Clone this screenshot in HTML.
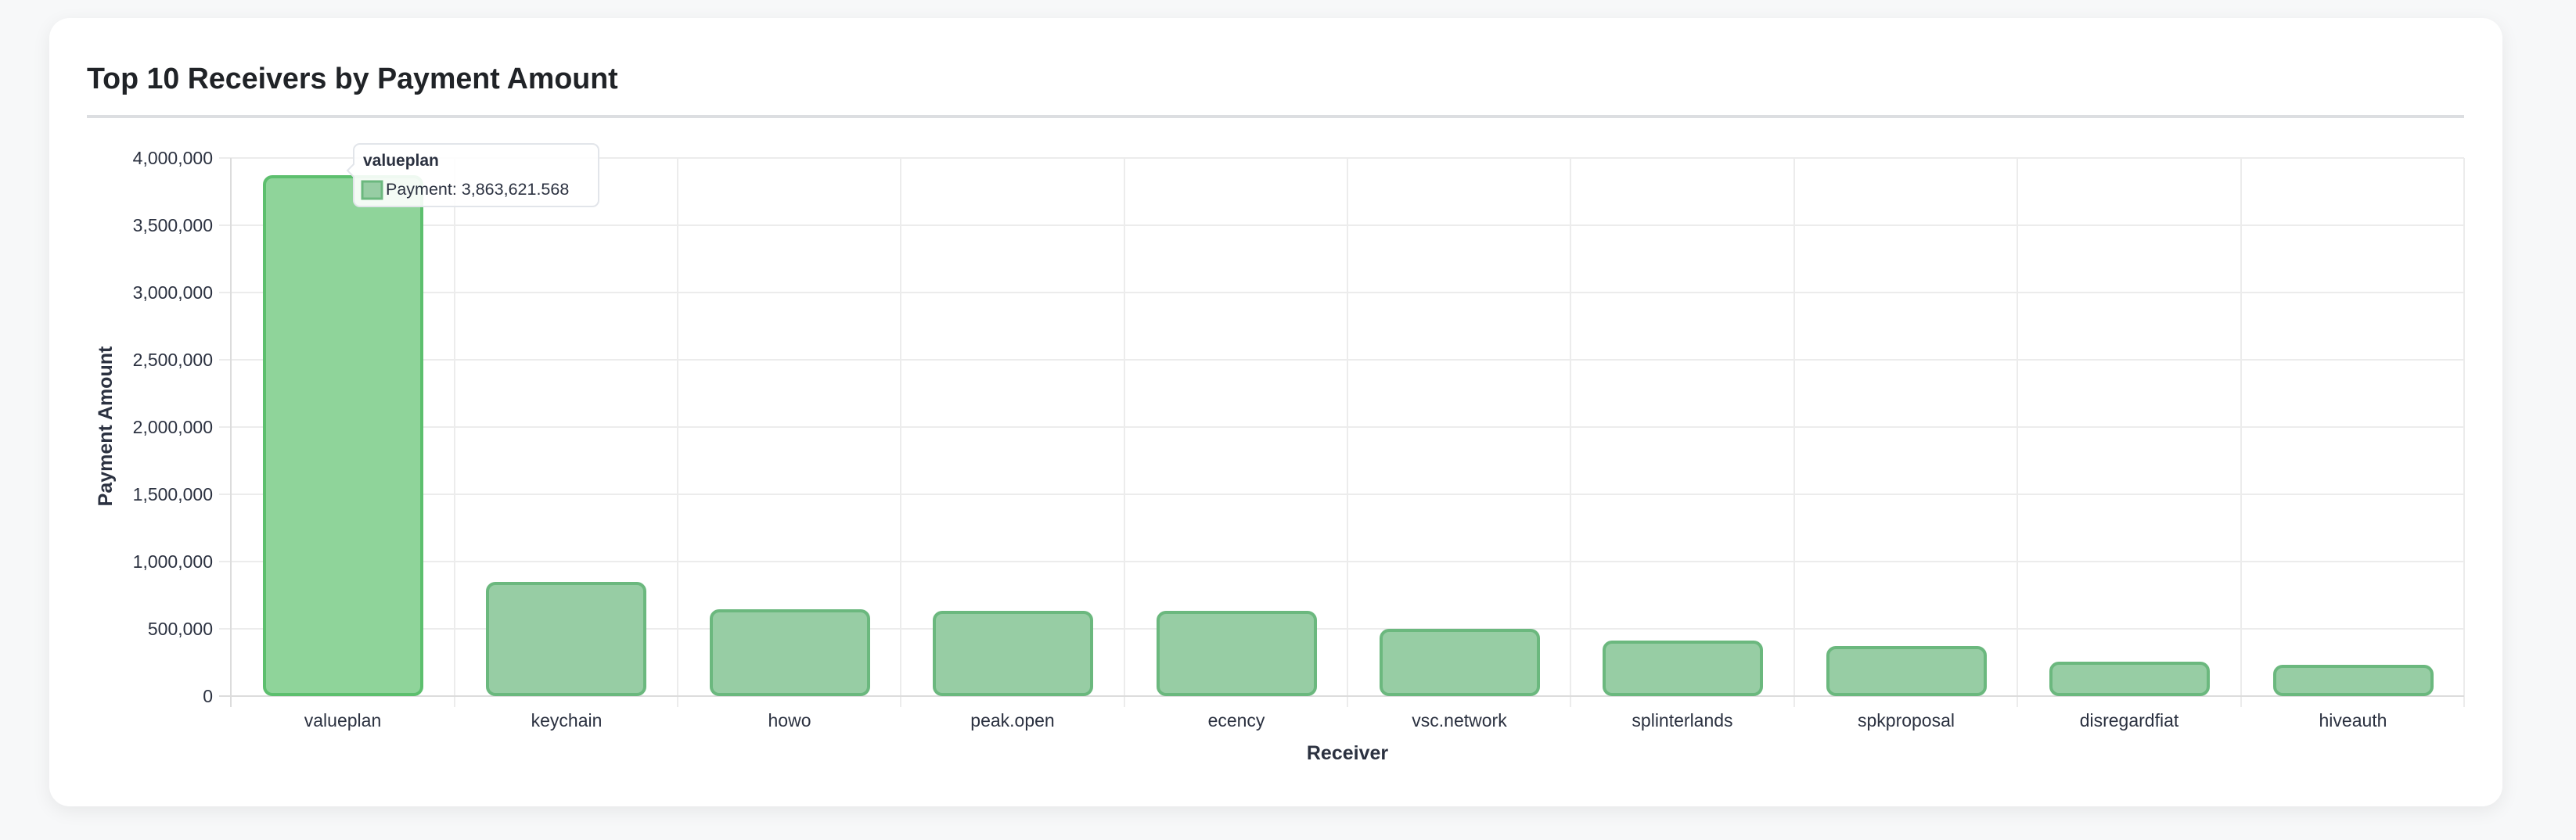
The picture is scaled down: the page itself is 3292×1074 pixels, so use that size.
<!DOCTYPE html>
<html><head><meta charset="utf-8"><style>
html,body{margin:0;padding:0;background:#f7f8f9;width:3292px;height:1074px;overflow:hidden;font-family:"Liberation Sans",Arial,sans-serif}
.card{position:absolute;left:63px;top:23px;width:3135px;height:1008px;background:#fff;border-radius:26px;box-shadow:0 6px 24px rgba(0,0,0,0.07)}
</style></head><body>
<div class="card"></div>
<svg width="3292" height="1074" style="position:absolute;left:0;top:0" xmlns="http://www.w3.org/2000/svg" font-family="Liberation Sans, Arial, sans-serif">
<text x="111" y="113" font-size="37.6" font-weight="bold" fill="#202327">Top 10 Receivers by Payment Amount</text>
<rect x="111" y="147" width="3038" height="4" fill="#dcdee1"/>
<g stroke="#ececec" stroke-width="2">
<line x1="280" y1="202" x2="3149" y2="202"/><line x1="280" y1="288" x2="3149" y2="288"/>
<line x1="280" y1="374" x2="3149" y2="374"/><line x1="280" y1="460" x2="3149" y2="460"/>
<line x1="280" y1="546" x2="3149" y2="546"/><line x1="280" y1="632" x2="3149" y2="632"/>
<line x1="280" y1="718" x2="3149" y2="718"/><line x1="280" y1="804" x2="3149" y2="804"/>
<line x1="581" y1="202" x2="581" y2="904"/><line x1="866" y1="202" x2="866" y2="904"/>
<line x1="1151" y1="202" x2="1151" y2="904"/><line x1="1437" y1="202" x2="1437" y2="904"/>
<line x1="1722" y1="202" x2="1722" y2="904"/><line x1="2007" y1="202" x2="2007" y2="904"/>
<line x1="2293" y1="202" x2="2293" y2="904"/><line x1="2578" y1="202" x2="2578" y2="904"/>
<line x1="2864" y1="202" x2="2864" y2="904"/><line x1="3149" y1="202" x2="3149" y2="904"/>
</g>
<line x1="295" y1="202" x2="295" y2="904" stroke="#dcdcdc" stroke-width="2"/>
<line x1="280" y1="890" x2="3149" y2="890" stroke="#dcdcdc" stroke-width="2"/>
<g font-size="23" fill="#2b3140" text-anchor="end">
<text x="272" y="210">4,000,000</text><text x="272" y="296">3,500,000</text><text x="272" y="382">3,000,000</text>
<text x="272" y="468">2,500,000</text><text x="272" y="554">2,000,000</text><text x="272" y="640">1,500,000</text>
<text x="272" y="726">1,000,000</text><text x="272" y="812">500,000</text><text x="272" y="898">0</text>
</g>
<text transform="translate(143,545) rotate(-90)" font-size="25" font-weight="bold" fill="#2b3140" text-anchor="middle">Payment Amount</text>
<g stroke-width="4">
<rect x="338" y="226" width="201" height="662" rx="10" fill="#8fd49a" stroke="#5dbf6e"/>
<g fill="#97cda4" stroke="#6bb87e">
<rect x="623" y="746" width="201" height="142" rx="10"/>
<rect x="909" y="781" width="201" height="107" rx="10"/>
<rect x="1194" y="783" width="201" height="105" rx="10"/>
<rect x="1480" y="783" width="201" height="105" rx="10"/>
<rect x="1765" y="806" width="201" height="82" rx="10"/>
<rect x="2050" y="821" width="201" height="67" rx="10"/>
<rect x="2336" y="828" width="201" height="60" rx="10"/>
<rect x="2621" y="848" width="201" height="40" rx="10"/>
<rect x="2907" y="852" width="201" height="36" rx="10"/>
</g></g>
<g font-size="23" fill="#2b3140" text-anchor="middle">
<text x="438" y="929">valueplan</text><text x="724" y="929">keychain</text><text x="1009" y="929">howo</text>
<text x="1294" y="929">peak.open</text><text x="1580" y="929">ecency</text><text x="1865" y="929">vsc.network</text>
<text x="2150" y="929">splinterlands</text><text x="2436" y="929">spkproposal</text><text x="2721" y="929">disregardfiat</text><text x="3007" y="929">hiveauth</text>
</g>
<text x="1722" y="971" font-size="25" font-weight="bold" fill="#2b3140" text-anchor="middle">Receiver</text>
<path d="M460,184 H757 a8,8 0 0 1 8,8 V256 a8,8 0 0 1 -8,8 H460 a8,8 0 0 1 -8,-8 V226 L444,218 L452,210 V192 a8,8 0 0 1 8,-8 Z" fill="rgba(255,255,255,0.9)" stroke="#e2e5ea" stroke-width="2"/>
<text x="464" y="212" font-size="21" font-weight="bold" fill="#2b3140">valueplan</text>
<rect x="463" y="232" width="25" height="22" fill="#97cda4" stroke="#6bb87e" stroke-width="3"/>
<text x="493" y="249" font-size="21.5" fill="#2b3140">Payment: 3,863,621.568</text>
</svg>
</body></html>
